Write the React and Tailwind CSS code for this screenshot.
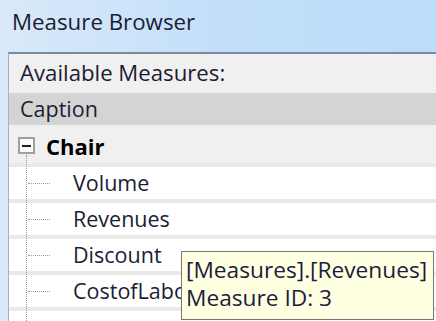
import React from "react";

const items = ["Volume", "Revenues", "Discount", "CostofLabor"];

export default function App() {
  return (
    <div
      className="w-[436px] h-[321px] overflow-hidden flex flex-col bg-gradient-to-r from-[#d9e9f9] via-[#c3dffa] to-[#bcdcfa] text-[#1c1c34]"
      style={{ fontFamily: '"Open Sans", "Noto Sans", sans-serif' }}
    >
      {/* title */}
      <div className="h-[52px] shrink-0 pl-[12px] flex items-center text-[22.3px] leading-none pb-[8px]">
        Measure Browser
      </div>

      {/* panel */}
      <div className="relative flex-1 ml-[8px] border-l border-t-2 border-l-[#9fb2c6] border-t-[#7d8a98] bg-[#f0f0f0] flex flex-col">
        <div className="h-[39px] shrink-0 pl-[11px] flex items-center text-[22.2px] leading-none">
          Available Measures:
        </div>
        <div className="h-[32px] shrink-0 pl-[11px] flex items-center bg-[#d4d4d4] text-[21.5px] leading-none">
          Caption
        </div>
        <div className="h-[38px] shrink-0 flex items-center pl-[9px] gap-[11px] pt-[3px]">
          <div className="w-[17px] h-[17px] border-2 border-[#a0a0a0] bg-[#fafafa] flex items-center justify-center">
            <div className="w-[9px] h-[2px] bg-[#202020]" />
          </div>
          <span className="font-bold text-[22px] leading-none text-black">Chair</span>
        </div>

        {items.map((name) => (
          <div key={name} className="shrink-0 border-t-4 border-[#e9e9e9] h-[36px] bg-white flex items-center">
            <div className="w-[19px] shrink-0" />
            <div className="w-[22px] shrink-0 border-t border-dotted border-[#9a9a9a]" />
            <span className="ml-[23px] text-[21.5px] leading-none whitespace-nowrap">{name}</span>
          </div>
        ))}
        <div className="shrink-0 border-t-4 border-[#e9e9e9] h-[36px] bg-white" />

        {/* tree guide */}
        <div className="absolute left-[17px] top-[101px] bottom-0 border-l border-dotted border-[#9a9a9a]" />

        {/* tooltip */}
        <div className="absolute left-[172px] top-[197px] w-[253px] h-[69px] border border-[#767676] bg-[#ffffe1] pl-[4px] pt-[4px] text-[22.7px] leading-[28px] text-[#1c1c3c]">
          <div>[Measures].[Revenues]</div>
          <div>Measure ID: 3</div>
        </div>
      </div>
    </div>
  );
}
